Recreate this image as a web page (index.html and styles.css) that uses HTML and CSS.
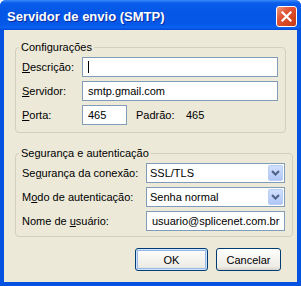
FILE: index.html
```html
<!DOCTYPE html>
<html lang="pt-BR">

<head>
  <meta charset="UTF-8">
  <title>Servidor de envio (SMTP)</title>
  <link rel="stylesheet" href="styles.css">
</head>

<body>
  <div class="window">
    <div class="titlebar">
      <span class="title">Servidor de envio (SMTP)</span>
      <span class="close">
        <svg width="19" height="19" viewBox="0 0 19 19">
          <path d="M5.5 5.5 L13.5 13.5 M13.5 5.5 L5.5 13.5" stroke="#fff" stroke-width="2.2" stroke-linecap="square" fill="none" />
        </svg>
      </span>
    </div>

    <div class="client">
      <fieldset class="group group-server">
        <legend>Configurações</legend>
        <div class="row">
          <span class="label"><u>D</u>escrição:</span>
          <div class="edit"><span class="caret"></span></div>
        </div>
        <div class="row">
          <span class="label"><u>S</u>ervidor:</span>
          <div class="edit">smtp.gmail.com</div>
        </div>
        <div class="row">
          <span class="label"><u>P</u>orta:</span>
          <div class="edit edit-port">465</div>
          <span class="default-label">Padrão:</span>
          <span>465</span>
        </div>
      </fieldset>

      <fieldset class="group group-auth">
        <legend>Segurança e autenticação</legend>
        <div class="row">
          <span class="label">Se<u>g</u>urança da conexão:</span>
          <div class="combo">
            <span class="combo-text">SSL/TLS</span>
            <span class="combo-btn">
              <svg width="9" height="6" viewBox="0 0 9 6"><path d="M1 1 L4.5 4.5 L8 1" stroke="#4D6185" stroke-width="2" fill="none" /></svg>
            </span>
          </div>
        </div>
        <div class="row">
          <span class="label">M<u>o</u>do de autenticação:</span>
          <div class="combo">
            <span class="combo-text">Senha normal</span>
            <span class="combo-btn">
              <svg width="9" height="6" viewBox="0 0 9 6"><path d="M1 1 L4.5 4.5 L8 1" stroke="#4D6185" stroke-width="2" fill="none" /></svg>
            </span>
          </div>
        </div>
        <div class="row">
          <span class="label">Nome de <u>u</u>suário:</span>
          <div class="edit">usuario@splicenet.com.br</div>
        </div>
      </fieldset>

      <div class="actions">
        <span class="btn btn-default btn-ok">OK</span>
        <span class="btn btn-cancel">Cancelar</span>
      </div>
    </div>
  </div>
</body>

</html>
```

FILE: styles.css
```css
body {
  margin: 0;
  font-family: 'Liberation Sans', Arial, sans-serif;
  font-size: 11px;
  color: #000;
  background: #fff;
}

.window {
  width: 301px;
  height: 286px;
  display: flex;
  flex-direction: column;
  border-radius: 6px 6px 0 0;
  overflow: hidden;
  background: #0552E0;
}

.titlebar {
  height: 30px;
  flex: 0 0 30px;
  display: flex;
  align-items: center;
  justify-content: space-between;
  padding: 0 4px 0 7px;
  background: linear-gradient(to bottom, #3A8CF8 0%, #0A5DEB 10%, #0356E6 45%, #0557E8 80%, #0A62F0 92%, #0348D8 100%);
}

.title {
  color: #fff;
  font-weight: bold;
  font-size: 13px;
  text-shadow: 1px 1px 0 #0A2A9A;
  padding-top: 2px;
}

.close {
  width: 19px;
  height: 19px;
  border: 1px solid #fff;
  border-radius: 3px;
  background: linear-gradient(135deg, #F09A80 0%, #E2583A 35%, #D4451F 70%, #C53A18 100%);
  display: flex;
  margin-top: 2px;
}

.client {
  flex: 1;
  margin: 0 4px 4px;
  background: #ECE9D8;
  display: flex;
  flex-direction: column;
}

.group {
  margin: 10px 11px 0;
  padding: 3px 7px 5px 6px;
  border: 1px solid #D0D0BF;
  border-radius: 4px;
  display: flex;
  flex-direction: column;
  gap: 4px;
}

.group-server {
  padding-bottom: 7px;
}

.group-auth {
  margin-top: 13px;
}

legend {
  padding: 0 2px;
  margin-left: -3px;
  line-height: 14px;
}

.row {
  display: flex;
  align-items: center;
  height: 20px;
}

.label {
  flex: 0 0 60px;
  white-space: nowrap;
}

.group-auth .label {
  flex-basis: 124px;
}

.edit {
  box-sizing: border-box;
  flex: 1;
  height: 20px;
  border: 1px solid #7F9DB9;
  background: #fff;
  padding: 0 5px;
  display: flex;
  align-items: center;
  white-space: nowrap;
  overflow: hidden;
}

.edit-port {
  flex: 0 0 45px;
}

.default-label {
  margin-left: 9px;
  width: 50px;
}

.caret {
  width: 1px;
  height: 12px;
  background: #000;
}

.combo {
  box-sizing: border-box;
  flex: 1;
  height: 20px;
  border: 1px solid #7F9DB9;
  background: #fff;
  padding: 1px;
  display: flex;
  align-items: center;
}

.combo-text {
  flex: 1;
  padding-left: 2px;
}

.combo-btn {
  box-sizing: border-box;
  width: 15px;
  height: 16px;
  border: 1px solid #BBCDF5;
  border-radius: 2px;
  background: linear-gradient(to bottom, #D3E0FD 0%, #C0D2FA 50%, #AFC6F5 100%);
  display: flex;
  align-items: center;
  justify-content: center;
}

.actions {
  display: flex;
  justify-content: flex-end;
  gap: 8px;
  margin: 11px 16px 0 0;
}

.btn {
  box-sizing: border-box;
  height: 23px;
  border: 1px solid #003C74;
  border-radius: 3px;
  background: linear-gradient(to bottom, #FFFFFF 0%, #F4F3EE 50%, #ECEBE6 85%, #D8D2C6 100%);
  display: flex;
  align-items: center;
  justify-content: center;
}

.btn-ok {
  width: 73px;
}

.btn-cancel {
  width: 65px;
}

.btn-default {
  box-shadow: inset 0 0 0 1px #CEE3FC, inset 0 0 0 2px #98B8EA;
}
```
